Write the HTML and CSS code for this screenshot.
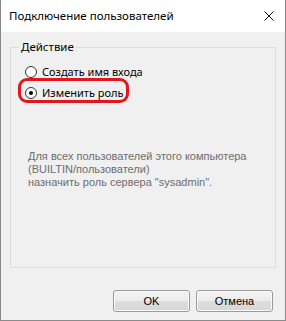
FILE: index.html
```html
<!DOCTYPE html>
<html lang="ru">
<head>
<meta charset="utf-8">
<title>Подключение пользователей</title>
<link rel="stylesheet" href="styles.css">
</head>
<body>
<div class="window">
  <div class="titlebar">
    <span class="title">Подключение пользователей</span>
    <svg class="close" width="10" height="10" viewBox="0 0 10 10"><path d="M0.5 0.5 L9.5 9.5 M9.5 0.5 L0.5 9.5" stroke="#111" stroke-width="1"/></svg>
  </div>
  <div class="content">
    <fieldset class="group">
      <legend class="legend">Действие</legend>
      <div class="options">
        <label class="radio-row"><span class="radio"></span><span>Создать имя входа</span></label>
        <label class="radio-row highlighted"><span class="radio checked"></span><span>Изменить роль</span><span class="mark"></span></label>
      </div>
      <p class="desc">Для всех пользователей этого компьютера<br>(BUILTIN/пользователи)<br>назначить роль сервера "sysadmin".</p>
    </fieldset>
    <div class="buttons">
      <button class="btn">OK</button>
      <button class="btn">Отмена</button>
    </div>
  </div>
</div>
</body>
</html>
```

FILE: styles.css
```css
* { box-sizing: border-box; }
html, body { margin: 0; padding: 0; background: #fff; }
.window {
  width: 286px;
  height: 321px;
  border: 1px solid #8a8a8a;
  border-top: none;
  display: flex;
  flex-direction: column;
  font-family: "Noto Sans", "Liberation Sans", sans-serif;
  font-size: 12px;
  color: #000;
}
.titlebar {
  height: 32px;
  background: #fff;
  display: flex;
  align-items: center;
  padding-left: 8px;
  padding-right: 11px;
  justify-content: space-between;
}
.title { font-size: 11.5px; line-height: 16px; margin-top: -1px; }
.close { display: block; margin-top: 0; }
.content {
  flex: 1;
  background: #f0f0f0;
  display: flex;
  flex-direction: column;
}
.group {
  margin: 8px 9px 0 9px;
  padding: 0 0 0 14px;
  border: 1px solid #dcdcdc;
  height: 228px;
  min-width: 0;
}
.legend {
  margin-left: -6px;
  padding: 0 2px 0 2px;
  line-height: 14px;
  font-size: 11.5px;
}
.options { padding-top: 7px; display: flex; flex-direction: column; }
.radio-row {
  position: relative;
  display: flex;
  align-items: center;
  height: 21px;
  gap: 5px;
  line-height: 16px;
  font-size: 11px;
}
.radio {
  width: 12px;
  height: 12px;
  border-radius: 50%;
  border: 1px solid #333;
  background: #fff;
  display: flex;
  align-items: center;
  justify-content: center;
  flex: none;
}
.radio.checked::after {
  content: "";
  width: 4px;
  height: 4px;
  border-radius: 50%;
  background: #000;
}
.mark {
  position: absolute;
  left: -7px;
  top: -4px;
  width: 111px;
  height: 25px;
  border: 3px solid #e3161e;
  border-radius: 9px;
}
.desc {
  margin: 47px 0 0 3px;
  font-family: "Liberation Sans", Arial, sans-serif;
  font-size: 11px;
  line-height: 13px;
  color: #6d6d6d;
}
.buttons {
  display: flex;
  justify-content: flex-end;
  gap: 6px;
  padding-right: 12px;
  margin-top: 22px;
}
.btn {
  width: 77px;
  height: 22px;
  border: 1px solid #9a9a9a;
  border-radius: 3px;
  background: linear-gradient(#f3f3f3 0, #ececec 50%, #dedede 51%, #d6d6d6 100%);
  box-shadow: inset 0 0 0 1px #fbfbfb;
  font-family: "Liberation Sans", Arial, sans-serif;
  font-size: 11px;
  color: #000;
  padding: 0;
}
```
